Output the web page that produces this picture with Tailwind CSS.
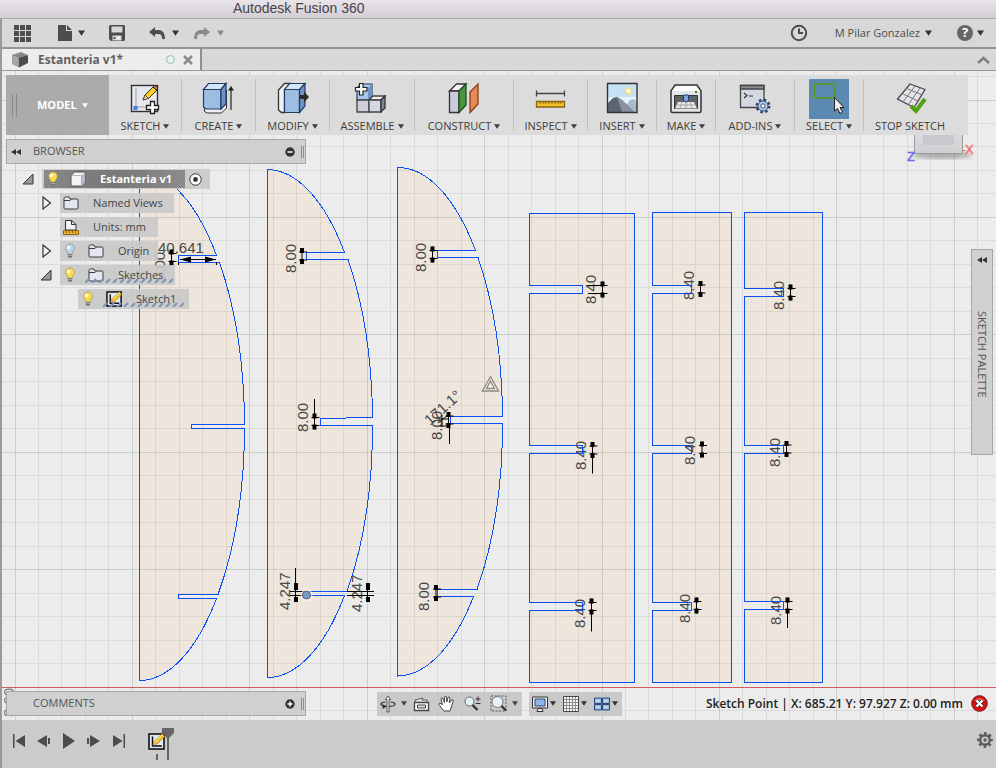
<!DOCTYPE html>
<html lang="en">
<head>
  <meta charset="UTF-8" />
  <meta name="viewport" content="width=device-width, initial-scale=1.0"/>
  <title>Autodesk Fusion 360</title>
  <script src="https://cdn.jsdelivr.net/npm/@tailwindcss/browser@4"></script>
</head>
<body class="flex h-screen flex-col overflow-hidden bg-[#ececec] font-['Open_Sans',sans-serif] text-[#3c3c3c]">

  <!-- Shared icons -->
  <svg class="hidden">
    <symbol id="caret" viewBox="0 0 8 6"><path d="M0 0h8L4 6z" fill="currentColor"/></symbol>
    <symbol id="bulb" viewBox="0 0 12 18">
      <path d="M6 1a5 5 0 0 1 5 5c0 3-2.500 3.500-2.500 6.500h-5C3.500 9.500 1 9 1 6a5 5 0 0 1 5-5z" stroke="#9a8a50" stroke-width=".7"/>
      <circle cx="4.500" cy="5" r="2" fill="#fff" opacity=".85"/>
      <path d="M3.500 12.500h5v2.500l-1 1.500h-3l-1-1.500z" fill="#777"/>
      <path d="M3.500 14h5" stroke="#ccc" stroke-width=".7"/>
    </symbol>
    <symbol id="folder" viewBox="0 0 16 14">
      <path d="M1 12V2.500Q1 1 2.500 1H6l1 2h7q1 0 1 1v8q0 1-1 1H2q-1 0-1-1z" fill="#e4e7ee" stroke="#3a3d45"/>
      <path d="M1 4.500h6l1.500-1.500" fill="none" stroke="#3a3d45"/>
    </symbol>
    <symbol id="sketch" viewBox="0 0 18 18">
      <rect x="1" y="1" width="15" height="15" fill="#dfeaf6" stroke="#111" stroke-width="1.600"/>
      <path d="M4.500 3.500v9.500H14" fill="none" stroke="#111" stroke-width="1.500"/>
      <path d="M5 12l1.500-4L14 1l2.500 2.500L9 11z" fill="#f3c62a" stroke="#b77b1a" stroke-width=".7"/>
      <path d="M5 12l1.500-4L9 11z" fill="#f0a868"/>
      <path d="M7 8.500l7.500-7" stroke="#fff19a"/>
    </symbol>
    <symbol id="closed" viewBox="0 0 10 14"><path d="M1 1l7.500 6L1 13z" fill="#f4f4f4" stroke="#333" stroke-width="1.200"/></symbol>
    <symbol id="open" viewBox="0 0 12 12"><path d="M11 1v10H1z" fill="#999" stroke="#333"/></symbol>
    <symbol id="rewind" viewBox="0 0 10 6"><path d="M5 0v6L0 3zM10 0v6L5 3z" fill="#333"/></symbol>
    <symbol id="hatch" viewBox="0 0 90 5">
      <path d="M0 5l4-4m3 4l4-4m3 4l4-4m3 4l4-4m3 4l4-4m3 4l4-4m3 4l4-4m3 4l4-4m3 4l4-4m3 4l4-4m3 4l4-4m3 4l4-4m3 4l4-4" stroke="#7d95b8" stroke-width="2"/>
    </symbol>
  </svg>

  <header class="h-[19px] shrink-0 border-b border-[#a9a5ab] bg-linear-to-b from-[#e8e4e9] to-[#d3cdd5] pl-[233px] font-['Liberation_Sans',sans-serif] text-[14px] leading-[17px] text-[#48444a]">Autodesk Fusion 360</header>

  <div class="flex min-h-0 flex-1 flex-col border-l-2 border-[#9a9a9a]">

    <!-- Quick access bar -->
    <nav class="flex h-[30px] shrink-0 items-center border-b-2 border-[#949494] bg-[#d8d8d8] pr-3 pl-3 text-[#4d4d4d]">
      <button aria-label="Data panel" class="w-[17px]"><svg class="h-[17px] w-[17px]" viewBox="0 0 17 17" fill="currentColor"><path d="M0 0h5v5H0zM6 0h5v5H6zM12 0h5v5h-5zM0 6h5v5H0zM6 6h5v5H6zM12 6h5v5h-5zM0 12h5v5H0zM6 12h5v5H6zM12 12h5v5h-5z"/></svg></button>
      <button aria-label="File" class="ml-[27px] flex items-center gap-[6px]">
        <svg class="h-4 w-[14px]" viewBox="0 0 14 16" fill="currentColor"><path d="M0 0h8v6h6v10H0zM9 0l5 5H9z"/></svg>
        <svg class="h-[6px] w-[7px] text-[#333]"><use href="#caret"/></svg>
      </button>
      <button aria-label="Save" class="ml-[24px]"><svg class="h-4 w-4" viewBox="0 0 16 16"><path fill="currentColor" fill-rule="evenodd" d="M1 0h14l1 1v14l-1 1H2l-2-2V1zM2.500 1.500v6h11v-6zM3.500 10.500v5h9v-5z"/><path d="M4.500 12h2v2h-2z" fill="currentColor"/><path d="M7.500 11.500h4v3h-4z" fill="#eee"/></svg></button>
      <button aria-label="Undo" class="ml-[24px] flex items-center gap-[7px]">
        <svg class="h-3 w-4" viewBox="0 0 16 12" fill="currentColor"><path d="M0 5l6-5v3h4q6 .5 6 9h-3q.3-5-3.500-5H6V10z"/></svg>
        <svg class="h-[6px] w-[7px] text-[#333]"><use href="#caret"/></svg>
      </button>
      <button aria-label="Redo" class="ml-[15px] flex items-center gap-[7px] text-[#8b8b8b]">
        <svg class="h-3 w-4" viewBox="0 0 16 12" fill="currentColor"><path d="M16 5l-6-5v3H6Q0 3.500 0 12h3q-.3-5 3.500-5H10V10z"/></svg>
        <svg class="h-[6px] w-[7px]"><use href="#caret"/></svg>
      </button>
      <button aria-label="Job status" class="ml-auto"><svg class="h-[18px] w-[18px]" viewBox="0 0 18 18" fill="none" stroke="currentColor" stroke-width="2"><circle cx="9" cy="9" r="7.200"/><path d="M9 4.500V9h4"/></svg></button>
      <button class="ml-[27px] flex items-center gap-[5px] text-[11px]"><span>M Pilar Gonzalez</span><svg class="h-[6px] w-[7px] text-[#333]"><use href="#caret"/></svg></button>
      <button aria-label="Help" class="ml-[25px] flex items-center gap-1">
        <span class="flex h-4 w-4 items-center justify-center rounded-full bg-[#666] text-[13px] font-bold text-white">?</span>
        <svg class="h-[6px] w-[7px] text-[#333]"><use href="#caret"/></svg>
      </button>
    </nav>

    <!-- Document tabs -->
    <div class="flex h-[22px] shrink-0 items-center justify-between border-b border-[#999] bg-[#d8d8d8]">
      <div class="flex h-full w-[200px] items-center border-r-2 border-[#8f8f8f] bg-[#ededed] pl-[10px]">
        <svg class="h-4 w-4" viewBox="0 0 16 16"><path d="M0 3l9-3 7 3-9 2.500z" fill="#888"/><path d="M0 3l7 2.500V15l-7-3.500z" fill="#a8a8a8" stroke="#777" stroke-width=".5"/><path d="M7 5.500L16 3v8l-9 4.500z" fill="#4c4c4c"/></svg>
        <span class="ml-[10px] text-[12px] font-bold text-[#626262]">Estanteria v1*</span>
        <span class="ml-auto h-[9px] w-[9px] rounded-full border-[1.5px] border-[#7ec8b8]"></span>
        <button aria-label="Close tab" class="mr-[7px] ml-2"><svg class="h-[10px] w-[10px]" viewBox="0 0 10 10"><path d="M1 1l8 8M9 1L1 9" stroke="#8a8a8a" stroke-width="2.600"/></svg></button>
      </div>
      <button aria-label="Collapse" class="mr-[6px]"><svg class="h-2 w-[13px]" viewBox="0 0 13 8"><path d="M1 7l5.500-5L12 7" fill="none" stroke="#808080" stroke-width="2.600"/></svg></button>
    </div>

    <main class="relative flex min-h-0 flex-1 flex-col">

      <!-- Sketch canvas -->
      <svg id="canvas" class="absolute inset-0 h-full w-full font-['Liberation_Sans',sans-serif] text-[15px]">
        <defs>
          <g id="dim"><path d="M0-8V8" stroke="#000"/><path d="M-2-8h4v5h-4zM-2 3h4v5h-4z" fill="#000"/><path d="M-3-4H5M-3 4H5" stroke="#000"/></g>
          <g id="boards">
            <path d="M139.500 171.500A105 254 0 0 1 216.500 255.500H178.500V262.500H219.500A105 254 0 0 1 244.500 424.500H191.500V428.500H244.500A105 254 0 0 1 218 594.500H178.500V598.500H216.500A105 254 0 0 1 139.500 680.500Z"/>
            <path d="M267.500 169.500A105 254 0 0 1 344.500 252.500H306.500V259.500H348A105 254 0 0 1 372.500 417.500L320.500 418.500V425.500H372.500A105 254 0 0 1 347 591.500H306.500V595.500H344.500A105 254 0 0 1 267.500 677.500Z"/>
            <path d="M397.500 167.500A105 254 0 0 1 475.500 250.500H437.500V257.500H478A105 254 0 0 1 502.500 416.500H450.500V423.500H502.500A105 254 0 0 1 477 589.500H437.500V596.500H473.500A105 254 0 0 1 397.500 676Z"/>
            <path d="M529.500 213.500H634.500V682.500H529.500V610.500H582.500V602.500H529.500V453.500H582.500V445.500H529.500V293.500H582.500V285.500H529.500Z"/>
            <path d="M652.500 212.500H731.500V682.500H652.500V610.500H691.500V602.500H652.500V453.500H691.500V445.500H652.500V293.500H691.500V285.500H652.500Z"/>
            <path d="M744.500 212.500H822.500V682.500H744.500V609.500H783.500V601.500H744.500V453.500H783.500V445.500H744.500V296.500H783.500V288.500H744.500Z"/>
          </g>
          <linearGradient id="cube" x2="0" y2="1"><stop offset="0" stop-color="#dcdce0"/><stop offset="1" stop-color="#cfcfd1"/></linearGradient>
          <filter id="soft"><feGaussianBlur stdDeviation="2"/></filter>
        </defs>
        <g transform="translate(-2 -71)">
          <use href="#boards" fill="#eee6dc"/>
          <path id="gridMinor" fill="none" stroke="#000" stroke-opacity=".07" shape-rendering="crispEdges"/>
          <path id="gridMajor" fill="none" stroke="#000" stroke-opacity=".13" shape-rendering="crispEdges"/>
          <path d="M0 687.500H3000" stroke="#d05c60"/>

          <!-- Dimensions -->
          <g fill="#484848">
            <text x="158" y="253">40.641</text>
            <text transform="translate(165 281) rotate(-90)">8.00</text>
            <text transform="translate(296 273) rotate(-90)">8.00</text>
            <text transform="translate(308 432) rotate(-90)">8.00</text>
            <text transform="translate(290 610) rotate(-90)">4.247</text>
            <text transform="translate(362 612) rotate(-90)">4.247</text>
            <text transform="translate(426 272) rotate(-90)">8.00</text>
            <text transform="translate(442 440) rotate(-90)">8.00</text>
            <text transform="translate(430 426) rotate(-42)">171.1°</text>
            <text transform="translate(429 611) rotate(-90)">8.00</text>
            <text transform="translate(596 304) rotate(-90)">8.40</text>
            <text transform="translate(586 470) rotate(-90)">8.40</text>
            <text transform="translate(585 628) rotate(-90)">8.40</text>
            <text transform="translate(694 300) rotate(-90)">8.40</text>
            <text transform="translate(695 465) rotate(-90)">8.40</text>
            <text transform="translate(690 623) rotate(-90)">8.40</text>
            <text transform="translate(784 310) rotate(-90)">8.40</text>
            <text transform="translate(780 467) rotate(-90)">8.40</text>
            <text transform="translate(781 625) rotate(-90)">8.40</text>
          </g>
          <use href="#boards" fill="none" stroke="#0a50f0" shape-rendering="crispEdges"/>
          <use href="#dim" x="171.500" y="257.500"/><use href="#dim" x="302" y="256"/><use href="#dim" x="314.500" y="421.500"/>
          <use href="#dim" x="432.500" y="254.500"/><use href="#dim" x="448.500" y="420"/><use href="#dim" x="436" y="593"/>
          <use href="#dim" x="602.500" y="289.500"/><use href="#dim" x="592.500" y="450"/><use href="#dim" x="591.500" y="606.500"/>
          <use href="#dim" x="700.500" y="289"/><use href="#dim" x="702" y="449.500"/><use href="#dim" x="696.500" y="605.500"/>
          <use href="#dim" x="790.500" y="292.500"/><use href="#dim" x="786.500" y="449"/><use href="#dim" x="787.500" y="605.500"/>
          <g stroke="#000" fill="none">
            <path d="M314.500 399V414M449.500 428V444M592.500 457V473.500M591.500 613V631.500M787.500 613V628M588 285.500H600M588 293.500H600"/>
            <path d="M295.500 568V602M290 591.500H305M290 595.500H305M367.500 583V602M347 591.500H374M347 595.500H374M180 259.500H216M178.500 262V265M216.500 262V265"/>
            <path d="M438 423l10-8M438 419h10M440 426h8M442 415v12"/>
          </g>
          <path d="M180 259.500l11-3v6zM216 259.500l-11-3v6zM294 583h4v7h-4zM294 597h4v5h-4zM366 583h4v7h-4zM366 597h4v5h-4z"/>
          <circle cx="306.500" cy="595" r="6" fill="#fff" opacity=".6"/>
          <circle cx="306.500" cy="595" r="4" fill="#7b97cc" stroke="#59616e"/>
          <path d="M490.500 376.500l8 14.500h-16zM490.500 381l4 7.500h-8z" fill="#f4f0ea" stroke="#8a8782" stroke-width="1.300"/>

          <!-- Dimension half hidden by the comments bar -->
          <text transform="translate(14 717) rotate(-90)" fill="#777">8.00</text>

          <!-- View cube -->
          <ellipse cx="942" cy="155" rx="30" ry="4" fill="#777" opacity=".55" filter="url(#soft)"/>
          <path d="M914.500 132H962.500V153.500H914.500z" fill="url(#cube)" stroke="#9b9b9f"/>
          <path d="M923 132H954V145H923z" fill="#c8c8cf"/>
          <path d="M962.500 150.500h3" stroke="#f66"/>
          <text x="907" y="161" fill="#6c6cf2" stroke="#6c6cf2" stroke-width=".4" class="text-[13px]">Z</text>
          <text x="965" y="154" fill="#f66a6a" stroke="#f66a6a" stroke-width=".4" class="text-[13px]">X</text>
        </g>
      </svg>

      <!-- Toolbar -->
      <div class="relative mt-1 ml-1 flex h-[60px] w-max shrink-0 bg-[#dcdcdc] text-[11px] leading-[14px]">
        <button class="flex w-[103px] items-center bg-[#ababab] pl-[6px] font-bold text-white">
          <span class="h-[23px] w-[5px] border-x border-[#8a8a8a]"></span>
          <span class="ml-[20px]">MODEL</span>
          <svg class="ml-[5px] h-[5px] w-[6px]"><use href="#caret"/></svg>
        </button>
        <button class="flex w-[72px] flex-col items-center pt-1">
          <svg class="h-10 w-10" viewBox="0 0 40 40">
            <rect x="6.500" y="6.500" width="26" height="26" fill="#e6e8ef" stroke="#333" stroke-width="1.400"/>
            <path d="M11 9v19h18" stroke="#999" fill="none"/>
            <path d="M8.500 27h4v4h-4z" fill="#3f7fe0"/>
            <path d="M18 21l2-5 9-9 4 3-9 9z" fill="#ffd21c" stroke="#333"/><path d="M18 21l2-5 3.500 3.500z" fill="#f4c89a" stroke="#333" stroke-width=".7"/><path d="M28 8l2-2 3 3-2 2z" fill="#b5765a" stroke="#333"/>
            <path d="M25.500 22.500h4v4h4v4h-4v4h-4v-4h-4v-4h4z" fill="#fff" stroke="#222" stroke-width="1.300"/>
          </svg>
          <span class="flex items-center gap-[3px]">SKETCH <svg class="h-[5px] w-[6px]"><use href="#caret"/></svg></span>
        </button>
        <span class="my-1 w-px bg-[#c2c2c2]"></span>
        <button class="flex w-[73px] flex-col items-center pt-1">
          <svg class="h-10 w-10" viewBox="0 0 40 40">
            <path d="M5.500 29v3.500l3 1.500h14l5-5V11" fill="#f0f0f2" stroke="#333"/>
            <path d="M4.500 10.500l5-6H27l-5 6z" fill="#d5e6f6" stroke="#223c66" stroke-width="1.200"/>
            <path d="M4.500 10.500H22V30H7l-2.500-2z" fill="#9dbee3" stroke="#223c66" stroke-width="1.200"/>
            <path d="M22 10.500l5-6V25l-5 5z" fill="#6d92c4" stroke="#223c66" stroke-width="1.200"/>
            <path d="M32 31V10" stroke="#222" stroke-width="1.200"/><path d="M32 7l3 4.500h-6z" fill="#222"/>
          </svg>
          <span class="flex items-center gap-[3px]">CREATE <svg class="h-[5px] w-[6px]"><use href="#caret"/></svg></span>
        </button>
        <span class="my-1 w-px bg-[#c2c2c2]"></span>
        <button class="flex w-[73px] flex-col items-center pt-1">
          <svg class="h-10 w-10" viewBox="0 0 40 40">
            <path d="M5.500 31L5.500 11l6-6.500h6l-6 7v22h-3z" fill="#f1f1f4" stroke="#333" stroke-width="1.300"/>
            <path d="M11.500 10.500l5-6H32l-5 6z" fill="#d5e6f6" stroke="#223c66" stroke-width="1.200"/>
            <path d="M11.500 10.500H26.500v23h-15z" fill="#9dbee3" stroke="#223c66" stroke-width="1.200"/>
            <path d="M26.500 10.500l5.500-6V27l-5.500 6.500z" fill="#6d92c4" stroke="#223c66" stroke-width="1.200"/>
            <path d="M27 16h4v-3.500l5 5.500-5 5.500V20h-4z" fill="#2b2b2b"/>
          </svg>
          <span class="flex items-center gap-[3px]">MODIFY <svg class="h-[5px] w-[6px]"><use href="#caret"/></svg></span>
        </button>
        <span class="my-1 w-px bg-[#c2c2c2]"></span>
        <button class="flex w-[84px] flex-col items-center pt-1">
          <svg class="h-10 w-10" viewBox="0 0 40 40">
            <path d="M5 9l4-4h11v12l-4 4H5z" fill="#a8c8ec" stroke="#223c66" stroke-width="1.200"/><path d="M16 9l4-4v12l-4 4z" fill="#6d92c4"/>
            <path d="M5 21h12v12H5z" fill="#cdd0da" stroke="#444" stroke-width="1.300"/>
            <path d="M17 21l4-4h12l-4 4z" fill="#f2f3f6" stroke="#444" stroke-width="1.300"/>
            <path d="M17 21h12v12H17z" fill="#d5d8e0" stroke="#444" stroke-width="1.300"/>
            <path d="M29 21l4-4v12l-4 4z" fill="#7c8594" stroke="#333" stroke-width="1.300"/>
            <path d="M7.500 4.500H11v4h4V12h-4v4H7.500v-4h-4V8.500h4z" fill="#fff" stroke="#222" stroke-width="1.200"/>
          </svg>
          <span class="flex items-center gap-[3px]">ASSEMBLE <svg class="h-[5px] w-[6px]"><use href="#caret"/></svg></span>
        </button>
        <span class="my-1 w-px bg-[#c2c2c2]"></span>
        <button class="flex w-[98px] flex-col items-center pt-1">
          <svg class="h-10 w-10" viewBox="0 0 40 40">
            <path d="M5.500 12l7-7H22l-7 7z" fill="#f5f5f7" stroke="#333" stroke-width="1.300"/>
            <path d="M5.500 12H15v21.500H5.500z" fill="#c9ccda" stroke="#333" stroke-width="1.300"/>
            <path d="M15 12l7-7v21l-7 7.500z" fill="#4a9440" stroke="#1f4f1d" stroke-width="1.300"/>
            <path d="M26 13l8-8v20l-8 8.500z" fill="#e8895a" stroke="#8a3c16" stroke-width="1.300"/>
          </svg>
          <span class="flex items-center gap-[3px]">CONSTRUCT <svg class="h-[5px] w-[6px]"><use href="#caret"/></svg></span>
        </button>
        <span class="my-1 w-px bg-[#c2c2c2]"></span>
        <button class="flex w-[73px] flex-col items-center pt-1">
          <svg class="h-10 w-10" viewBox="0 0 40 40">
            <path d="M5.500 11.500v6M33.500 11.500v6M5.500 14.500h28" stroke="#444" stroke-width="1.300"/>
            <path d="M5.500 22.500h28v5.500h-28z" fill="#f0c02a" stroke="#8a6210" stroke-width="1.300"/>
            <path d="M9 23v2M12 23v2M15 23v2M18 23v2M21 23v2M24 23v2M27 23v2M30 23v2" stroke="#8a6210"/>
          </svg>
          <span class="flex items-center gap-[3px]">INSPECT <svg class="h-[5px] w-[6px]"><use href="#caret"/></svg></span>
        </button>
        <span class="my-1 w-px bg-[#c2c2c2]"></span>
        <button class="flex w-[68px] flex-col items-center pt-1">
          <svg class="h-10 w-10" viewBox="0 0 40 40">
            <path d="M5.500 4.500H35v29H5.500z" fill="#c4e2f4"/>
            <path d="M6 18H35v10H6z" fill="#e6f5fb"/>
            <circle cx="26.500" cy="12" r="3" fill="#fffbe0" stroke="#f5dc7a" stroke-width="1.500"/>
            <path d="M19 33l9-12 4-1 3 3v10z" fill="#a9bcc8"/>
            <path d="M6 24l5-5 4-1 5 3 12 12H6z" fill="#5d6373"/><path d="M15 18l5 3 12 12H20z" fill="#8990a0"/>
            <path d="M5.500 4.500H35v29H5.500z" fill="none" stroke="#333" stroke-width="1.400"/>
          </svg>
          <span class="flex items-center gap-[3px]">INSERT <svg class="h-[5px] w-[6px]"><use href="#caret"/></svg></span>
        </button>
        <span class="my-1 w-px bg-[#c2c2c2]"></span>
        <button class="flex w-[58px] flex-col items-center pt-1">
          <svg class="h-10 w-10" viewBox="0 0 40 40">
            <path d="M5 12l4-6h22l4 6v20q0 1.500-1.500 1.500h-27Q5 33.500 5 32z" fill="#e3e5e9" stroke="#333" stroke-width="1.500"/>
            <path d="M6 12l4-5h20l4 5z" fill="#fafafa"/>
            <path d="M8.500 16.500h23v13h-23z" fill="#5f6267" stroke="#333"/>
            <path d="M12 23h16l3 6.500H9z" fill="#e8e8ea"/><path d="M11 26h18M16 23l-2 6M20 23v6M24 23l2 6" stroke="#999" stroke-width=".8"/>
            <path d="M17.500 16h5v5L20 23.500 17.500 21z" fill="#79a7e2" stroke="#1f3f7a"/>
            <path d="M29 12h2v2h-2z" fill="#1c8a22"/>
          </svg>
          <span class="flex items-center gap-[3px]">MAKE <svg class="h-[5px] w-[6px]"><use href="#caret"/></svg></span>
        </button>
        <span class="my-1 w-px bg-[#c2c2c2]"></span>
        <button class="flex w-[78px] flex-col items-center pt-1">
          <svg class="h-10 w-10" viewBox="0 0 40 40">
            <path d="M5.500 6.500H29v22H5.500z" fill="#d3d8e3" stroke="#444" stroke-width="1.300"/>
            <path d="M5.500 6.500H29V10H5.500z" fill="#8b8f98" stroke="#444" stroke-width="1.300"/>
            <path d="M9 14l3 2.500L9 19M14 17h4" fill="none" stroke="#333" stroke-width="1.200"/>
            <circle cx="28" cy="27" r="6.300" fill="none" stroke="#2c4770" stroke-width="2.400" stroke-dasharray="2.500 2.448"/>
            <circle cx="28" cy="27" r="5" fill="#b9cfe9" stroke="#2c4770"/>
            <circle cx="28" cy="27" r="2.200" fill="#fff" stroke="#2c4770"/>
          </svg>
          <span class="flex items-center gap-[3px]">ADD-INS <svg class="h-[5px] w-[6px]"><use href="#caret"/></svg></span>
        </button>
        <span class="my-1 w-px bg-[#c2c2c2]"></span>
        <button class="flex w-[68px] flex-col items-center pt-1">
          <svg class="h-10 w-10 bg-[#5a8ab2]" viewBox="0 0 40 40">
            <path d="M5.500 5H26v14H5.500z" fill="none" stroke="#5b9a1c" stroke-width="1.600"/>
            <path d="M25.500 18.500v13.500l3-2.500 2.500 5 2.500-1.500-2.500-4.500h4z" fill="#eee" stroke="#222"/>
          </svg>
          <span class="flex items-center gap-[3px]">SELECT <svg class="h-[5px] w-[6px]"><use href="#caret"/></svg></span>
        </button>
        <span class="my-1 w-px bg-[#c2c2c2]"></span>
        <button class="flex w-[104px] flex-col items-center pt-1 pr-3">
          <svg class="h-10 w-10" viewBox="0 0 40 40">
            <path d="M20 5l15 5.500-11 18L7.500 20z" fill="#e3e5ea" stroke="#444" stroke-width="1.300"/>
            <path d="M16.500 9.500l15 6M12 14.500l16 7.500M25 7L13 23M30 9L18.500 25.500" stroke="#777"/>
            <path d="M21 27l5 5 9-12" fill="none" stroke="#4fa312" stroke-width="4"/>
          </svg>
          <span>STOP SKETCH</span>
        </button>
      </div>

      <div class="relative flex min-h-0 flex-1 items-start justify-between">
        <!-- Browser -->
        <section class="mt-1 ml-1 w-[300px] text-[11px] text-[#444]">
          <div class="flex h-[25px] items-center border border-[#a6a6a6] bg-[#d0d0d0] pr-px pl-1 text-[#555]">
            <svg class="h-[6px] w-[10px]"><use href="#rewind"/></svg>
            <span class="ml-3">BROWSER</span>
            <button aria-label="Collapse browser" class="mr-[6px] ml-auto"><svg class="h-[10px] w-[10px]" viewBox="0 0 10 10"><circle cx="5" cy="5" r="4.700" fill="#333"/><path d="M2.500 5h5" stroke="#fff" stroke-width="1.500"/></svg></button>
            <span class="h-3 w-[3px] border-x border-[#8d8d8d]"></span>
          </div>
          <ul class="mt-[5px] flex flex-col gap-1 leading-5">
            <li class="flex h-5 items-center pl-4">
              <svg class="mr-2 h-3 w-3"><use href="#open"/></svg>
              <div class="flex h-5 w-[168px] items-center bg-[#c9c9c9]/90 pl-[2px]">
                <div class="flex h-[18px] w-[141px] items-center bg-linear-to-r from-[#888] via-[#777] to-[#8c8c8c] pl-[3px] text-white">
                  <svg class="h-4 w-3" fill="#f6dc4e"><use href="#bulb"/></svg>
                  <svg class="ml-[11px] h-4 w-4" viewBox="0 0 16 16"><path d="M1 4.500L4.500 1H15v10.500L11.500 15H1z" fill="#f2f3f6" stroke="#555"/><path d="M11.500 4.500L15 1v10.500L11.500 15z" fill="#b9bcc6"/><path d="M1 4.500h10.500V15" fill="none" stroke="#aaa" stroke-width=".8"/></svg>
                  <span class="ml-[14px] font-bold">Estanteria v1</span>
                </div>
                <svg class="ml-1 h-[13px] w-[13px]" viewBox="0 0 13 13"><circle cx="6.500" cy="6.500" r="5.700" fill="#fff" stroke="#333"/><circle cx="6.500" cy="6.500" r="2.400" fill="#333"/></svg>
              </div>
            </li>
            <li class="flex h-5 items-center pl-[36px]">
              <svg class="mr-2 h-[14px] w-[10px]"><use href="#closed"/></svg>
              <div class="flex h-5 w-[114px] items-center bg-[#c9c9c9]/90 pl-[3px]">
                <svg class="h-[14px] w-4"><use href="#folder"/></svg><span class="ml-[14px]">Named Views</span>
              </div>
            </li>
            <li class="flex h-5 items-center pl-[54px]">
              <div class="flex h-5 w-[98px] items-center bg-[#c9c9c9]/90 pl-[3px]">
                <svg class="h-4 w-4" viewBox="0 0 16 16"><path d="M2.500 11V1.500h6l4.500 4V11z" fill="#f0f1f6" stroke="#333"/><path d="M8.500 1.500v4H13" fill="none" stroke="#333"/><path d="M.500 11.500h15v4H.500z" fill="#e9b52a" stroke="#8a6210"/><path d="M3.500 12v2M6.500 12v2M9.500 12v2M12.500 12v2" stroke="#8a6210"/></svg>
                <span class="ml-[14px]">Units: mm</span>
              </div>
            </li>
            <li class="flex h-5 items-center pl-[36px]">
              <svg class="mr-2 h-[14px] w-[10px]"><use href="#closed"/></svg>
              <div class="flex h-5 w-[98px] items-center bg-[#c9c9c9]/90 pl-1">
                <svg class="h-4 w-3" fill="#b8d4f4"><use href="#bulb"/></svg>
                <svg class="ml-3 h-[14px] w-4"><use href="#folder"/></svg><span class="ml-[14px]">Origin</span>
              </div>
            </li>
            <li class="flex h-5 items-center pl-[34px]">
              <svg class="mr-2 h-3 w-3"><use href="#open"/></svg>
              <div class="relative flex h-5 w-[115px] items-center bg-[#c9c9c9]/90 pl-1">
                <svg class="h-4 w-3" fill="#f6dc4e"><use href="#bulb"/></svg>
                <svg class="ml-3 h-[14px] w-4"><use href="#folder"/></svg><span class="ml-[14px]">Sketches</span>
                <svg class="absolute bottom-[2px] left-[25px] h-[5px] w-[90px]"><use href="#hatch"/></svg>
              </div>
            </li>
            <li class="flex h-5 items-center pl-[72px]">
              <div class="relative flex h-5 w-[111px] items-center bg-[#c9c9c9]/90 pl-1">
                <svg class="h-4 w-3" fill="#f6dc4e"><use href="#bulb"/></svg>
                <svg class="ml-3 h-[17px] w-[17px]"><use href="#sketch"/></svg><span class="ml-[13px]">Sketch1</span>
                <svg class="absolute bottom-[2px] left-[25px] h-[5px] w-[82px]" viewBox="0 0 82 5"><use href="#hatch" width="90" height="5"/></svg>
              </div>
            </li>
          </ul>
        </section>

        <!-- Sketch palette -->
        <button class="mt-[114px] mr-[3px] flex h-[206px] w-[22px] flex-col items-center border border-[#a6a6a6] bg-[#d0d0d0] pt-[7px] text-[#555]">
          <svg class="h-[6px] w-[10px]"><use href="#rewind"/></svg>
          <span class="mt-[48px] text-[11px] leading-5 [writing-mode:vertical-rl]">SKETCH PALETTE</span>
        </button>
      </div>

      <!-- Comments, navigation, status -->
      <div class="relative mb-1 flex h-[25px] shrink-0 items-center pl-1">
        <div class="flex h-[25px] w-[300px] items-center border border-[#a6a6a6] bg-[#d0d0d0] pr-px pl-[26px] text-[11px] text-[#555]">
          <span>COMMENTS</span>
          <button aria-label="Expand comments" class="mr-[6px] ml-auto"><svg class="h-[10px] w-[10px]" viewBox="0 0 10 10"><circle cx="5" cy="5" r="4.700" fill="#333"/><path d="M2.500 5h5M5 2.500v5" stroke="#fff" stroke-width="1.500"/></svg></button>
          <span class="h-3 w-[3px] border-x border-[#8d8d8d]"></span>
        </div>
        <div class="ml-[71px] flex h-6 w-[145px] items-center bg-[#c9c9c9] pl-[3px] text-[#444]">
          <button aria-label="Orbit" class="flex items-center gap-[5px]">
            <svg class="h-[18px] w-4" viewBox="0 0 16 18" fill="none" stroke="#333"><path d="M5.500 7C-1 7.500-1 11.500 8 11.500S17 7.500 10.500 7" stroke-width="1.200"/><path d="M8 1l2.500 3.500H9V17H7V4.500H5.500z" fill="#fff" stroke-width=".8"/><path d="M2.500 9l4 2.500-4 2.500z" fill="#333" stroke="none"/></svg>
            <svg class="h-[5px] w-[6px]"><use href="#caret"/></svg>
          </button>
          <button aria-label="Look at" class="ml-[6px]"><svg class="h-4 w-[17px]" viewBox="0 0 17 16" fill="none" stroke="#444"><path d="M2 7V4l8-2-1 2h5v3" fill="#e0e0e0" stroke-width=".8"/><path d="M1.500 6.500h14v8h-14z" fill="#fff" stroke-width="1.300"/><path d="M4.500 9h8v3h-8z" fill="#ddd"/></svg></button>
          <button aria-label="Pan" class="ml-2"><svg class="h-[17px] w-[17px]" viewBox="0 0 17 17"><path d="M5 15L1 9.500q0-2 2-1l1.500 1.500L3 4q.5-2 2-.5l1.500 4L6.500 2q1-2 2 0l.3 5 1.200-4.500q1.500-1.500 2 .5l-.7 5L13.500 5q2-1 1.700 1L13 13l-1 3H6z" fill="#fff" stroke="#444"/></svg></button>
          <button aria-label="Zoom" class="ml-[9px]"><svg class="h-[17px] w-[17px]" viewBox="0 0 17 17"><circle cx="5.500" cy="6.500" r="4.500" fill="#e4f4f6" stroke="#666"/><path d="M8.500 10l5 5" stroke="#333" stroke-width="2.400"/><path d="M11.500 4h5M14 1.500v5M11.500 8.500h5" stroke="#333"/></svg></button>
          <button aria-label="Fit" class="ml-[9px] flex items-center gap-[5px]">
            <svg class="h-[17px] w-[17px]" viewBox="0 0 17 17"><path d="M1 1h15v15H1z" fill="none" stroke="#555" stroke-dasharray="2 1.500"/><circle cx="7.500" cy="7" r="5.500" fill="#e4f4f6" stroke="#777"/><path d="M11.500 11l4.500 4.500" stroke="#333" stroke-width="2.400"/></svg>
            <svg class="h-[5px] w-[6px]"><use href="#caret"/></svg>
          </button>
        </div>
        <div class="ml-[7px] flex h-6 w-[93px] items-center gap-[7px] bg-[#c9c9c9] pl-[3px] text-[#333]">
          <button aria-label="Display settings" class="flex items-center gap-[2px]"><svg class="h-4 w-4" viewBox="0 0 16 16"><path d="M.500 1h15v11H.500z" fill="#eee" stroke="#333"/><path d="M3 3h10v7H3z" fill="#8fb4e6" stroke="#2c4770"/><path d="M6 12.500h4l1 3H5z" fill="#eee" stroke="#333"/></svg><svg class="h-[5px] w-[6px]"><use href="#caret"/></svg></button>
          <button aria-label="Grid and snaps" class="flex items-center gap-[2px]"><svg class="h-4 w-4" viewBox="0 0 16 16"><path d="M.500.500h15v15H.500z" fill="#fafafa"/><path d="M3.500 0v16M6.500 0v16M9.500 0v16M12.500 0v16M0 3.500h16M0 6.500h16M0 9.500h16M0 12.500h16" fill="none" stroke="#8a8a8a"/><path d="M.500.500h15v15H.500z" fill="none" stroke="#444"/></svg><svg class="h-[5px] w-[6px]"><use href="#caret"/></svg></button>
          <button aria-label="Viewports" class="flex items-center gap-[2px]"><svg class="h-4 w-4" viewBox="0 0 16 16" fill="#9dbce6" stroke="#2c4770"><path d="M.500 2h7v5.500h-7zM8.500 2h7v5.500h-7zM.500 8.500h7V14h-7zM8.500 8.500h7V14h-7z"/><path d="M2.500 4h3v1.500h-3zM10.500 4h3v1.500h-3zM2.500 10.500h3V12h-3zM10.500 10.500h3V12h-3z" fill="#d7e6f8" stroke="none"/></svg><svg class="h-[5px] w-[6px]"><use href="#caret"/></svg></button>
        </div>
        <span class="ml-auto text-[12px] font-semibold text-[#222]">Sketch Point | X: 685.21 Y: 97.927 Z: 0.00 mm</span>
        <button aria-label="Errors" class="mr-2 ml-2"><svg class="h-[17px] w-[17px]" viewBox="0 0 17 17"><circle cx="8.500" cy="8.500" r="7.800" fill="#d8100c" stroke="#6e1a18"/><path d="M3 6q5.500-6 11 0" fill="#f48a86" opacity=".7"/><path d="M5.500 5.500l6 6M11.500 5.500l-6 6" stroke="#333" stroke-width="3.600"/><path d="M5.500 5.500l6 6M11.500 5.500l-6 6" stroke="#fff" stroke-width="2.200"/></svg></button>
      </div>
    </main>

    <!-- Timeline -->
    <footer class="flex h-12 shrink-0 items-start bg-[#cbcbcb] pl-[11px] text-[#4c4c4c]">
      <button aria-label="First" class="mt-[14px]"><svg class="h-[14px] w-3" viewBox="0 0 12 14" fill="currentColor"><path d="M0 0h1.500v14H0zM12 1v12L2.500 7z"/></svg></button>
      <button aria-label="Step back" class="mt-[14px] ml-3"><svg class="h-[14px] w-[13px]" viewBox="0 0 13 14" fill="currentColor"><path d="M10 1v12L0 7zM11 4h2v6h-2z"/></svg></button>
      <button aria-label="Play" class="mt-[13px] ml-[13px]"><svg class="h-4 w-3" viewBox="0 0 12 16" fill="currentColor"><path d="M0 0l12 8-12 8z"/></svg></button>
      <button aria-label="Step forward" class="mt-[14px] ml-3"><svg class="h-[14px] w-[13px]" viewBox="0 0 13 14" fill="currentColor"><path d="M3 1v12l10-6zM0 4h2v6H0z"/></svg></button>
      <button aria-label="Last" class="mt-[14px] ml-[13px]"><svg class="h-[14px] w-3" viewBox="0 0 12 14" fill="currentColor"><path d="M10.500 0H12v14h-1.500zM0 1v12l9.500-6z"/></svg></button>
      <div class="mt-2 ml-[23px]">
        <svg class="h-8 w-[27px]" viewBox="0 0 27 32">
          <use href="#sketch" x="0" y="5" width="18" height="18"/>
          <path d="M9 26v6M20 6v26" stroke="#666" stroke-width="2"/>
          <path d="M14 0h12v5l-5 5h-2l-5-5z" fill="#666"/>
        </svg>
      </div>
      <button aria-label="Timeline settings" class="mt-3 mr-[3px] ml-auto"><svg class="h-4 w-4" viewBox="0 0 16 16" fill="none" stroke="#5c5c5c"><circle cx="8" cy="8" r="4.800" stroke-width="2.400"/><circle cx="8" cy="8" r="6.600" stroke-width="2.600" stroke-dasharray="2.600 2.584" stroke-dashoffset="1.300"/><circle cx="8" cy="8" r="1.700" fill="#5c5c5c" stroke="none"/></svg></button>
    </footer>
  </div>

  <script>
    // Grid lines, every fifth one darker
    const STEP = 23.48;
    let minor = '';
    let major = '';

    for (let i = 0; i < 120; i++) {
      const x = Math.floor(15 + i * STEP) + 0.5;
      const y = Math.floor(100 + (i - 1) * STEP) + 0.5;
      if (i % 5 === 0) major += `M${x} 0V2000`; else minor += `M${x} 0V2000`;
      if ((i - 1) % 5 === 0) major += `M0 ${y}H3000`; else minor += `M0 ${y}H3000`;
    }

    document.getElementById('gridMinor').setAttribute('d', minor);
    document.getElementById('gridMajor').setAttribute('d', major);
  </script>
</body>
</html>
